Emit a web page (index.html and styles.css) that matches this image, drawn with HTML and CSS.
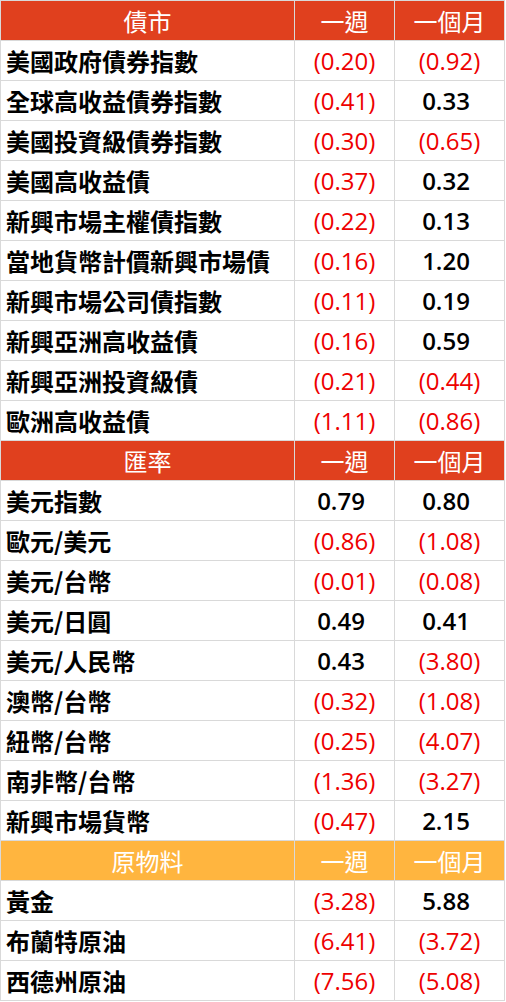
FILE: index.html
```html
<!DOCTYPE html>
<html lang="zh-Hant">
<head>
<meta charset="utf-8">
<title>市場表現</title>
<link rel="stylesheet" href="styles.css">
</head>
<body>
<div class="grid">
  <div class="hd red">債市</div><div class="hd red">一週</div><div class="hd red">一個月</div>

  <div class="lbl">美國政府債券指數</div><div class="num neg">(0.20)</div><div class="num neg">(0.92)</div>
  <div class="lbl">全球高收益債券指數</div><div class="num neg">(0.41)</div><div class="num pos">0.33</div>
  <div class="lbl">美國投資級債券指數</div><div class="num neg">(0.30)</div><div class="num neg">(0.65)</div>
  <div class="lbl">美國高收益債</div><div class="num neg">(0.37)</div><div class="num pos">0.32</div>
  <div class="lbl">新興市場主權債指數</div><div class="num neg">(0.22)</div><div class="num pos">0.13</div>
  <div class="lbl">當地貨幣計價新興市場債</div><div class="num neg">(0.16)</div><div class="num pos">1.20</div>
  <div class="lbl">新興市場公司債指數</div><div class="num neg">(0.11)</div><div class="num pos">0.19</div>
  <div class="lbl">新興亞洲高收益債</div><div class="num neg">(0.16)</div><div class="num pos">0.59</div>
  <div class="lbl">新興亞洲投資級債</div><div class="num neg">(0.21)</div><div class="num neg">(0.44)</div>
  <div class="lbl">歐洲高收益債</div><div class="num neg">(1.11)</div><div class="num neg">(0.86)</div>

  <div class="hd red">匯率</div><div class="hd red">一週</div><div class="hd red">一個月</div>

  <div class="lbl">美元指數</div><div class="num pos">0.79</div><div class="num pos">0.80</div>
  <div class="lbl">歐元/美元</div><div class="num neg">(0.86)</div><div class="num neg">(1.08)</div>
  <div class="lbl">美元/台幣</div><div class="num neg">(0.01)</div><div class="num neg">(0.08)</div>
  <div class="lbl">美元/日圓</div><div class="num pos">0.49</div><div class="num pos">0.41</div>
  <div class="lbl">美元/人民幣</div><div class="num pos">0.43</div><div class="num neg">(3.80)</div>
  <div class="lbl">澳幣/台幣</div><div class="num neg">(0.32)</div><div class="num neg">(1.08)</div>
  <div class="lbl">紐幣/台幣</div><div class="num neg">(0.25)</div><div class="num neg">(4.07)</div>
  <div class="lbl">南非幣/台幣</div><div class="num neg">(1.36)</div><div class="num neg">(3.27)</div>
  <div class="lbl">新興市場貨幣</div><div class="num neg">(0.47)</div><div class="num pos">2.15</div>

  <div class="hd gold">原物料</div><div class="hd gold">一週</div><div class="hd gold">一個月</div>

  <div class="lbl">黃金</div><div class="num neg">(3.28)</div><div class="num pos">5.88</div>
  <div class="lbl">布蘭特原油</div><div class="num neg">(6.41)</div><div class="num neg">(3.72)</div>
  <div class="lbl">西德州原油</div><div class="num neg">(7.56)</div><div class="num neg">(5.08)</div>
</div>
</body>
</html>
```
FILE: styles.css
```css
html, body {
  margin: 0;
  padding: 0;
  background: #ffffff;
}

.grid {
  display: grid;
  grid-template-columns: 294px 100px 110px;
  grid-auto-rows: 40px;
  width: 504px;
  border-left: 1px solid #d9d9d9;
  border-top: 1px solid #d9d9d9;
}

.grid > div {
  border-right: 1px solid #d9d9d9;
  border-bottom: 1px solid #d9d9d9;
  display: flex;
  align-items: center;
  font-size: 24px;
  line-height: 1;
  white-space: nowrap;
  overflow: hidden;
}

.hd {
  justify-content: center;
  color: #ffffff;
  font-family: "Noto Sans CJK TC", "Noto Sans", sans-serif;
  font-weight: 400;
}

.red { background: #e0401e; }
.gold { background: #ffb53f; }

.lbl {
  padding-left: 5px;
  font-family: "Noto Sans CJK TC", sans-serif;
  font-weight: 700;
  color: #000000;
}

.num {
  justify-content: center;
  font-family: "Open Sans", "Noto Sans", sans-serif;
}

.neg {
  color: #ee0000;
  font-weight: 500;
}

.pos {
  color: #000000;
  font-weight: 600;
  padding-right: 7px;
}
```
